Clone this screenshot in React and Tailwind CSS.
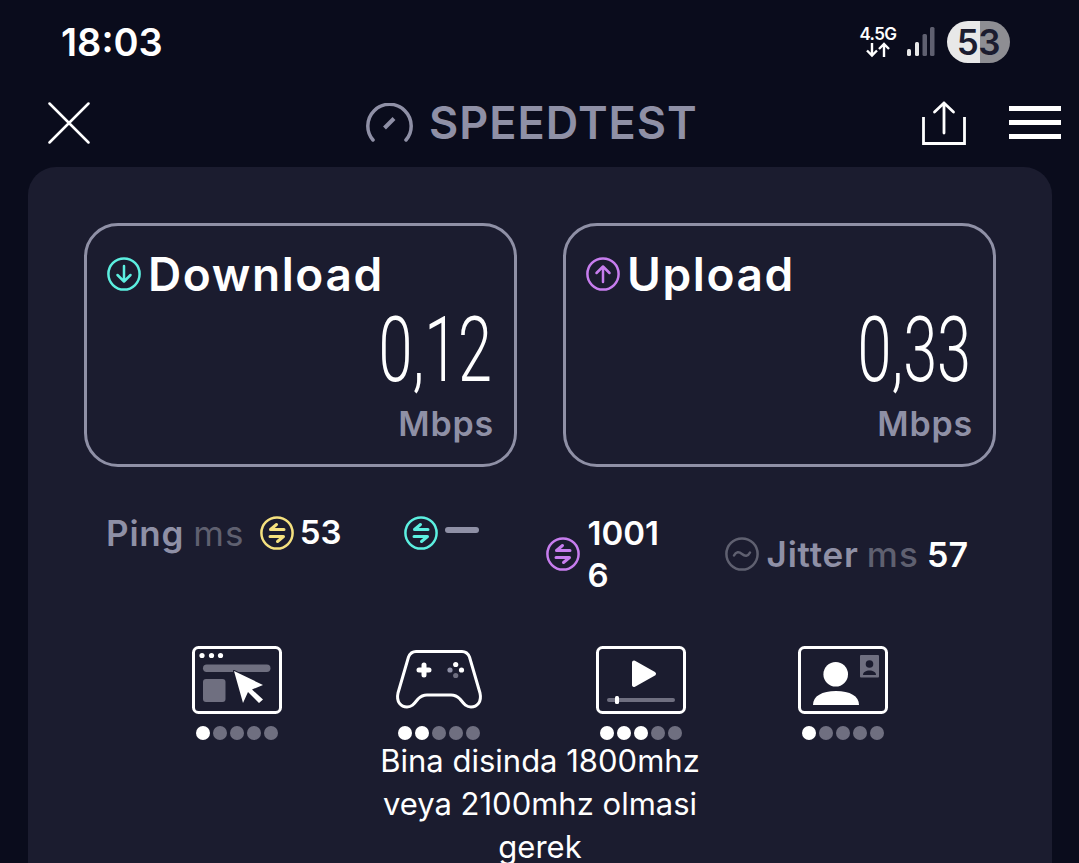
const font = "font-['Inter',_sans-serif]";

function ArrowCircle({ color }) {
  return (
    <svg width="34" height="34" viewBox="0 0 34 34" fill="none" stroke={color} strokeWidth="2.5" strokeLinecap="round" strokeLinejoin="round" className="shrink-0">
      <circle cx="17" cy="17" r="15.6" />
      <path d={'M24 13.5H10.5L16.5 8.5'} strokeWidth="3" />
      <path d={'M10 20.5H23.5L17.5 25.5'} strokeWidth="3" />
    </svg>
  );
}

function SpeedBox({ title, value, color, up }) {
  return (
    <div className="w-[433px] h-[244px] rounded-[34px] border-[3px] border-[#8f90a6] pl-[20px] pr-[21px] pt-[22px] flex flex-col">
      <div className="flex items-center gap-[7px] h-[52px]">
        <svg width="34" height="34" viewBox="0 0 34 34" fill="none" stroke={color} strokeWidth="2.5" strokeLinecap="round" strokeLinejoin="round">
          <circle cx="17" cy="17" r="15.6" />
          {up ? <path d="M17 25V10M10.5 16L17 9.5L23.5 16" /> : <path d="M17 9V24M10.5 18L17 24.5L23.5 18" />}
        </svg>
        <span className="text-[46px] leading-[52px] font-semibold tracking-[1.6px] text-white">{title}</span>
      </div>
      <div className="flex justify-end pr-[1px] h-[84px] mt-[9px]">
        <span className="font-['Roboto',_sans-serif] font-light text-[90px] leading-[84px] text-white origin-right scale-x-[0.68]">{value}</span>
      </div>
      <div className="text-right text-[34px] leading-[40px] font-semibold text-[#8f90a6] -mr-[1px] mt-[11px] tracking-[0.8px]">Mbps</div>
    </div>
  );
}

function Dots({ on }) {
  const all = [0, 1, 2, 3, 4];
  return (
    <div className="flex justify-center gap-[3.5px] mt-[12px]">
      {all.map((i) => (
        <span key={i} className={i < on ? 'w-[13.5px] h-[13.5px] rounded-full bg-white' : 'w-[13.5px] h-[13.5px] rounded-full bg-[#6f6f80]'} />
      ))}
    </div>
  );
}

function Browser() {
  return (
    <svg width="90" height="68" viewBox="0 0 90 68" fill="none">
      <rect x="1.5" y="1.5" width="87" height="65" rx="5" stroke="white" strokeWidth="3" />
      <circle cx="10" cy="9.5" r="2.6" fill="white" />
      <circle cx="19.5" cy="9.5" r="2.6" fill="white" />
      <circle cx="28.5" cy="9.5" r="2.6" fill="white" />
      <rect x="11" y="18.5" width="67.5" height="7.5" rx="3.7" fill="#6f6f80" />
      <rect x="11" y="33" width="22.5" height="23" rx="3" fill="#6f6f80" />
      <path d="M42 25L71 39L60 43.5L71 53.5L67 57L56 46L51 57Z" fill="white" stroke="#1b1c2f" strokeWidth="2" strokeLinejoin="round" paintOrder="stroke" />
    </svg>
  );
}

function Gamepad() {
  return (
    <svg width="90" height="68" viewBox="0 0 90 68" fill="none">
      <path d="M22 5.5H68C72 5.5 74 7.5 75.5 11L86 47C88 56 83 61 77 61C72 61 70 58 66 53C63 50 61 49 57 49H33C29 49 27 50 24 53C20 58 18 61 13 61C7 61 2 56 4 47L14.500 11C16 7.500 18 5.500 22 5.500Z" stroke="white" strokeWidth="3" strokeLinejoin="round" />
      <path d="M30 19V29M25 24H35" stroke="white" strokeWidth="5" strokeLinecap="round" />
      <circle cx="61.7" cy="18.5" r="2.6" fill="white" />
      <circle cx="67.5" cy="24" r="2.6" fill="white" />
      <circle cx="56" cy="24" r="2.6" fill="#8f90a6" />
      <circle cx="61.7" cy="29.5" r="2.6" fill="#6f6f80" />
    </svg>
  );
}

function Video() {
  return (
    <svg width="90" height="68" viewBox="0 0 90 68" fill="none">
      <rect x="1.5" y="1.5" width="87" height="65" rx="5" stroke="white" strokeWidth="3" />
      <path d="M38 16.5L58 27.7L38 39Z" fill="white" stroke="white" strokeWidth="4" strokeLinejoin="round" />
      <rect x="11" y="52" width="68" height="4" rx="2" fill="#6f6f80" />
      <rect x="19" y="50" width="4" height="8" rx="1.5" fill="white" />
    </svg>
  );
}

function VideoCall() {
  return (
    <svg width="90" height="68" viewBox="0 0 90 68" fill="none">
      <rect x="1.5" y="1.5" width="87" height="65" rx="5" stroke="white" strokeWidth="3" />
      <circle cx="37.7" cy="28.3" r="12.3" fill="white" />
      <path d="M15 59C15 50 24 45 38 45C52 45 61 50 61 59Z" fill="white" />
      <rect x="62" y="9" width="19" height="22.5" rx="1" fill="#6f6f80" />
      <circle cx="71.5" cy="18" r="3.8" fill="#1b1c2f" />
      <path d="M65 29C65 26 68 24.5 71.5 24.5C75 24.5 78 26 78 29Z" fill="#1b1c2f" />
    </svg>
  );
}

export default function App() {
  const apps = [
    { key: 'web', icon: <Browser />, on: 1 },
    { key: 'game', icon: <Gamepad />, on: 2 },
    { key: 'video', icon: <Video />, on: 3 },
    { key: 'call', icon: <VideoCall />, on: 1 },
  ];

  return (
    <div className={`${font} w-[1079px] h-[863px] overflow-hidden bg-[#0a0c1c] flex flex-col`}>
      {/* status bar */}
      <div className="h-[84px] shrink-0 flex items-center pl-[61px] pr-[69px]">
        <span className="text-[38px] leading-none font-semibold text-white">18:03</span>
        <div className="ml-auto flex items-center">
          <div className="flex flex-col items-center w-[38px]">
            <span className="text-[17px] leading-[16px] font-semibold text-white tracking-[-0.6px]">4.5G</span>
            <svg width="26" height="16" viewBox="0 0 26 16" fill="none" stroke="white" strokeWidth="2.4">
              <path d="M7 1V13M2 8.5L7 13.5L12 8.5" />
              <path d="M19 15V2M14 7L19 2L24 7" />
            </svg>
          </div>
          <svg width="28" height="30" viewBox="0 0 28 30" className="ml-[10px]">
            <rect x="0" y="22" width="4" height="7" rx="1.5" fill="#e8e8e8" />
            <rect x="8" y="15" width="4" height="14" rx="1.5" fill="#e8e8e8" />
            <rect x="15.5" y="7" width="4.5" height="22" rx="1.5" fill="#5f6070" />
            <rect x="23" y="0" width="4.5" height="29" rx="1.5" fill="#5f6070" />
          </svg>
          <div className="ml-[12px] w-[63px] h-[42px] rounded-full bg-[linear-gradient(90deg,#e8e8e8_53%,#8e8e93_53%)] flex items-center justify-center text-[35px] leading-none font-semibold text-[#1b1c2f] tracking-[-0.5px]">53</div>
        </div>
      </div>

      {/* header */}
      <div className="h-[85px] shrink-0 flex items-center pl-[48px] pr-[18px] -mt-[2px] pb-[4px]">
        <svg width="42" height="42" viewBox="0 0 42 42" fill="none" stroke="white" strokeWidth="2.500" strokeLinecap="round">
          <path d="M1.500 1.500L40.500 40.500M40.500 1.500L1.500 40.500" />
        </svg>
        <div className="ml-[276px] flex items-center gap-[16px]">
          <svg width="47" height="40" viewBox="0 0 47 40" fill="none" stroke="#8f90a6" strokeLinecap="round">
            <path d="M7 37C3.500 33 1.800 28 1.800 23A21.700 21.700 0 0 1 45.200 23C45.200 28 43.500 33 40 37" strokeWidth="3.500" />
            <path d="M18.500 25L28 15.500" strokeWidth="4" strokeLinecap="butt" />
          </svg>
          <span className="text-[45px] leading-none font-semibold text-[#8f90a6] tracking-[1px]">SPEEDTEST</span>
        </div>
        <svg width="44" height="44" viewBox="0 0 44 44" fill="none" stroke="white" strokeWidth="2.800" className="ml-auto">
          <path d="M1.500 16V42.500H42.500V16" />
          <path d="M22 32V2M12.500 11L22 2L31.500 11" strokeLinecap="round" strokeLinejoin="round" />
        </svg>
        <div className="ml-[43px] w-[52px] flex flex-col gap-[8.500px]">
          <span className="h-[5.500px] bg-white" />
          <span className="h-[5.500px] bg-white" />
          <span className="h-[5.500px] bg-white" />
        </div>
      </div>

      {/* main card */}
      <div className="ml-[28px] mr-[27px] flex-1 rounded-t-[28px] bg-[#1b1c2f] pt-[56px] flex flex-col">
        <div className="flex justify-center gap-[46px]">
          <SpeedBox title="Download" value="0,12" color="#5cefe0" />
          <SpeedBox title="Upload" value="0,33" color="#c77dee" up />
        </div>

        {/* ping / jitter row */}
        <div className="flex items-start pl-[78px] mt-[45px] h-[84px]">
          <div className="flex items-center h-[42px]">
            <span className="text-[35px] font-semibold text-[#8f90a6] tracking-[0.8px]">Ping</span>
            <span className="text-[35px] text-[#5f6070] ml-[9px] tracking-[1.2px]">ms</span>
            <span className="ml-[15px]"><ArrowCircle color="#f5e17f" /></span>
            <span className="text-[33px] font-semibold text-white ml-[6px]">53</span>
          </div>
          <div className="flex items-center h-[42px] ml-[62px]">
            <ArrowCircle color="#5cefe0" />
            <span className="ml-[7px] mb-[6px] w-[34px] h-[6px] rounded-full bg-[#8f90a6]" />
          </div>
          <div className="flex items-center self-center ml-[67px]">
            <ArrowCircle color="#c77dee" />
            <span className="ml-[8px] w-[78px] text-[33px] leading-[42px] font-semibold text-white break-all">10016</span>
          </div>
          <div className="flex items-center self-center ml-[59px]">
            <svg width="34" height="34" viewBox="0 0 34 34" fill="none" stroke="#5f6070" strokeWidth="2.500" strokeLinecap="round">
              <circle cx="17" cy="17" r="15.600" />
              <path d="M9 18.500C11 14.500 14 14.500 17 17C20 19.500 23 19.500 25 15.500" />
            </svg>
            <span className="text-[35px] font-semibold text-[#8f90a6] ml-[8px] tracking-[0.8px]">Jitter</span>
            <span className="text-[35px] font-medium text-[#5f6070] ml-[8px] tracking-[1.2px]">ms</span>
            <span className="text-[34px] font-semibold text-white ml-[8px]">57</span>
          </div>
        </div>

        {/* experience icons */}
        <div className="flex justify-center gap-[112px] mt-[50px]">
          {apps.map((a) => (
            <div key={a.key} className="w-[90px]">
              {a.icon}
              <Dots on={a.on} />
            </div>
          ))}
        </div>

        <p className="w-[360px] mx-auto -mt-[1px] text-center text-[31px] leading-[43px] text-white">
          Bina disinda 1800mhz veya 2100mhz olmasi gerek
        </p>
      </div>
    </div>
  );
}
